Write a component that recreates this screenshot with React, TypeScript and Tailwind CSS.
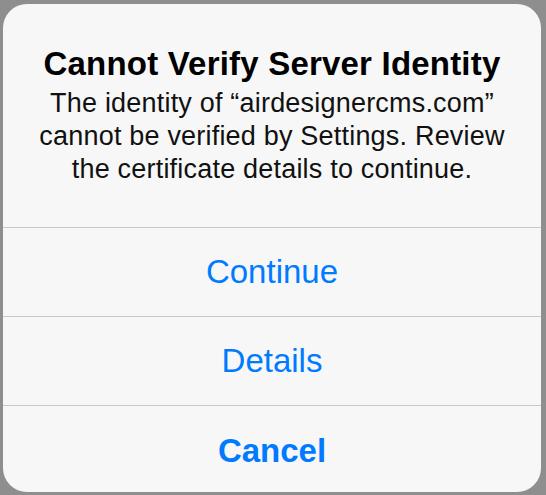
export default function App() {
  const font = { fontFamily: '"Liberation Sans", Arial, sans-serif' };
  return (
    <div
      className="w-[546px] h-[495px] bg-[#8e8e8e] pl-[3px] pr-[5px] pt-[4px] pb-[3px] flex"
      style={font}
    >
      <div className="flex-1 flex flex-col rounded-[24px] bg-[#f7f7f7] overflow-hidden">
        {/* Header */}
        <div className="pt-[40px] pb-[41px] flex flex-col items-center text-black">
          <div className="text-[33px] leading-[40px] font-bold tracking-[0.2px]">
            Cannot Verify Server Identity
          </div>
          <div className="mt-[3px] text-[27px] leading-[33px] tracking-[0.2px] text-center text-[#111] flex flex-col items-center">
            <span>The identity of “airdesignercms.com”</span>
            <span>cannot be verified by Settings. Review</span>
            <span>the certificate details to continue.</span>
          </div>
        </div>

        {/* Actions */}
        <div className="flex-1 flex flex-col text-[#007aff] text-[33px]">
          <div className="h-[89px] border-t border-[#c8c7cc] flex items-center justify-center">
            Continue
          </div>
          <div className="h-[89px] border-t border-[#c8c7cc] flex items-center justify-center">
            Details
          </div>
          <div className="flex-1 border-t border-[#c8c7cc] flex items-center justify-center font-bold pt-[4px]">
            Cancel
          </div>
        </div>
      </div>
    </div>
  );
}
